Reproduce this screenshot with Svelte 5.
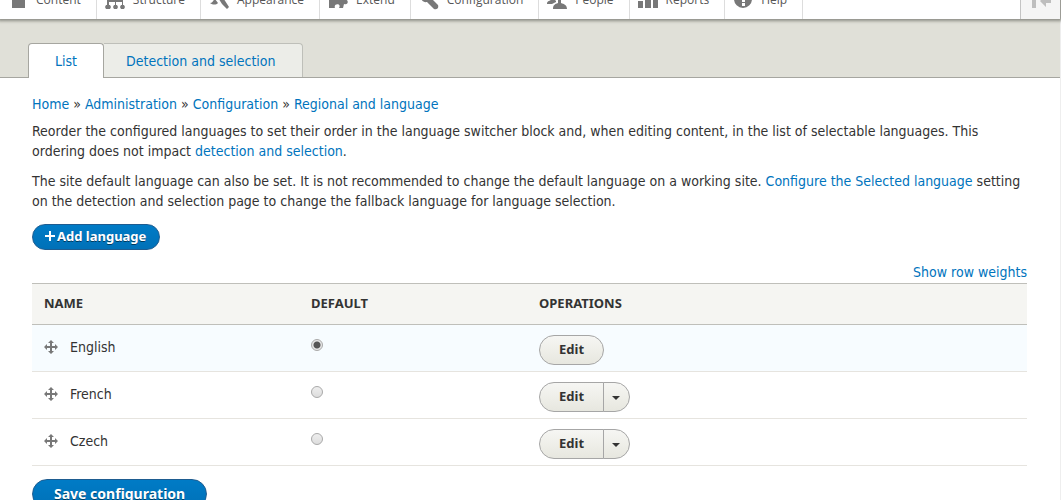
<script>
  const items = [
    { id: 'content', label: 'Content' },
    { id: 'structure', label: 'Structure' },
    { id: 'appearance', label: 'Appearance' },
    { id: 'extend', label: 'Extend' },
    { id: 'configuration', label: 'Configuration' },
    { id: 'people', label: 'People' },
    { id: 'reports', label: 'Reports' },
    { id: 'help', label: 'Help' }
  ];
  const crumbs = ['Home', 'Administration', 'Configuration', 'Regional and language'];
  const languages = [
    { name: 'English', more: false },
    { name: 'French', more: true },
    { name: 'Czech', more: true }
  ];
  let selected = $state('English');
</script>

<div class="page">
  <nav class="toolbar" aria-label="Administration menu">
    {#each items as item}
      <a class="item" href="#{item.id}">
        <svg class="icon" viewBox="0 0 20 20" aria-hidden="true">
          {#if item.id === 'content'}
            <path d="M4 0h7v6h6v12H4zM12 0l5 5h-5z" />
          {:else if item.id === 'structure'}
            <path d="M7 2h6v5h-2v3h7v5h1l1 2-1 2h-3l-1-2 1-2h1v-3h-6v3h1l1 2-1 2H9l-1-2 1-2h1v-3H4v3h1l1 2-1 2H1l-1-2 1-2h1v-5h7V7H7z" />
          {:else if item.id === 'appearance'}
            <path d="M1 13c3 0 3-3 5-4l3 4c-2 2-5 2-8 0zM8 6l3-3 9 14-2 2-5-5z" />
          {:else if item.id === 'extend'}
            <path d="M1 6h5c-2-4 6-4 4 0h6v4c5-2 5 6 0 4l-1 4h-4c3-5-6-5-4 0H1z" />
          {:else if item.id === 'configuration'}
            <path d="M2 5l4 3 3-3-3-4c4-1 7 3 6 7l7 7c1 3-1 5-4 4l-7-7C4 13 1 9 2 5z" />
          {:else if item.id === 'people'}
            <path d="M9 4c0-4 7-4 7 0 0 3-1 4-2 6v3c3 1 6 2 6 6H6c0-4 2-5 5-6v-3C9 8 9 6 9 4zM0 14c0-3 2-3 4-4-2-3-1-7 2-7 0 4 1 6 3 8v1l-4 2z" />
          {:else if item.id === 'reports'}
            <path d="M0 11h5v7H0zM7 6h6v12H7zM15 1h5v17h-5z" />
          {:else}
            <path fill-rule="evenodd" d="M10 0a9 9 0 1 0 0 18 9 9 0 0 0 0-18zM9 12h3v-2c4-2 3-7-2-7-3 0-4 2-4 4h3c0-2 2-2 2 0 0 1-2 1-2 3zM9 13h3v3H9z" />
          {/if}
        </svg>
        <span>{item.label}</span>
      </a>
    {/each}
    <button class="orient" type="button" aria-label="Vertical orientation">
      <svg class="icon" viewBox="0 0 20 20" aria-hidden="true"><path d="M1 2h4v16H1zM20 8v5h-5v4l-6-6 6-6v3z" /></svg>
    </button>
  </nav>

  <header class="head">
    <nav class="tabs" aria-label="Tabs">
      <a class="tab active" href="#list">List</a>
      <a class="tab" href="#detection">Detection and selection</a>
    </nav>
  </header>

  <main>
    <nav class="crumbs" aria-label="Breadcrumb">
      {#each crumbs as crumb, i}{#if i}{' » '}{/if}<a href="#crumb{i}">{crumb}</a>{/each}
    </nav>
    <p>Reorder the configured languages to set their order in the language switcher block and, when editing content, in the list of selectable languages. This ordering does not impact <a href="#detection">detection and selection</a>.</p>
    <p>The site default language can also be set. It is not recommended to change the default language on a working site. <a href="#selected">Configure the Selected language</a> setting on the detection and selection page to change the fallback language for language selection.</p>
    <a class="primary add" href="#add">
      <svg viewBox="0 0 10 10" aria-hidden="true"><path d="M4 0h2v4h4v2H6v4H4V6H0V4h4z" /></svg>Add language
    </a>

    <form onsubmit={(e) => e.preventDefault()}>
      <div class="weights"><button type="button">Show row weights</button></div>
      <table>
        <thead>
          <tr><th class="name" scope="col">Name</th><th class="default" scope="col">Default</th><th scope="col">Operations</th></tr>
        </thead>
        <tbody>
          {#each languages as lang}
            <tr class:current={lang.name === 'English'}>
              <td>
                <div class="lang">
                  <svg viewBox="0 0 14 14" aria-hidden="true"><path d="M7 0l3 3H8v3h3V4l3 3-3 3V8H8v3h2l-3 3-3-3h2V8H3v2L0 7l3-3v2h3V3H4z" /></svg>
                  <label for="lang-{lang.name}">{lang.name}</label>
                </div>
              </td>
              <td><input id="lang-{lang.name}" type="radio" name="default" value={lang.name} bind:group={selected} /></td>
              <td>
                <div class="ops">
                  <button class="edit" type="button">Edit</button>
                  {#if lang.more}
                    <button class="more" type="button" aria-label="List additional actions"><svg viewBox="0 0 8 4" aria-hidden="true"><path d="M0 0h8L4 4z" /></svg></button>
                  {/if}
                </div>
              </td>
            </tr>
          {/each}
        </tbody>
      </table>
      <button class="primary save" type="submit">Save configuration</button>
    </form>
  </main>
</div>

<style>
  :global(body) {
    margin: 0;
    background: #fff;
    color: #333;
    font: 14px/20px "DejaVu Sans Condensed", "Noto Sans", sans-serif;
  }
  :global(html) { overflow: hidden; }
  .page { border-right: 1px solid #eee; }
  a { color: #0074bd; text-decoration: none; }
  button { font: inherit; cursor: pointer; }
  .toolbar {
    position: relative;
    display: flex;
    height: 39px;
    margin-top: -20px;
    background: #fff;
    box-shadow: 0 0 3px 2px #8c8d85;
  }
  .item {
    display: flex;
    align-items: center;
    gap: 8px;
    padding: 0 15px 0 8px;
    border-right: 1px solid #ddd;
    color: #565656;
    font-family: "Open Sans", sans-serif;
    font-size: 12px;
  }
  .icon { width: 20px; height: 20px; fill: #787878; }
  .orient {
    display: flex;
    align-items: center;
    margin-left: auto;
    padding: 0 9px 0 10px;
    border: 0;
    border-left: 1px solid #c4c4c4;
    background: #f5f5f5;
  }
  .orient .icon { fill: #bebebe; }
  .head {
    padding: 24px 28px 0;
    border-bottom: 1px solid #a6a6a0;
    background: #e0e0d8;
  }
  .tabs { display: flex; }
  .tab {
    padding: 7px 26px 6px 22px;
    border: 1px solid #bebfb9;
    border-width: 1px 1px 0 0;
    border-radius: 0 4px 0 0;
    background: #ecede8;
  }
  .tab.active {
    margin-bottom: -1px;
    padding: 7px 26px;
    border-width: 1px 1px 0;
    border-color: #a6a6a0;
    border-radius: 4px 4px 0 0;
    background: #fff;
  }
  main { padding: 16px 33px 0 32px; }
  p { margin: 0 0 10px; }
  .crumbs { margin-bottom: 7px; }
  .primary {
    display: inline-flex;
    align-items: center;
    border: 1px solid #1e5c90;
    border-radius: 20px;
    background: linear-gradient(#007bc6, #0071b8);
    color: #fff;
    font-family: "Noto Sans", sans-serif;
    font-weight: 700;
    text-shadow: 0 1px rgba(0, 0, 0, .5);
  }
  .add { gap: 2px; margin-top: 3px; padding: 1px 13px 3px 12px; font-size: 13px; }
  .add svg { width: 10px; height: 10px; fill: #fff; }
  .weights { margin-top: 12px; padding-bottom: 1px; text-align: right; }
  .weights button { padding: 0; border: 0; background: none; color: #0074bd; }
  table { width: 100%; border-collapse: collapse; table-layout: fixed; }
  th {
    height: 38px;
    padding: 0 12px 2px;
    border: solid #bfbfba;
    border-width: 1px 0;
    background: #f5f5f2;
    font-family: "Noto Sans", sans-serif;
    font-size: 13px;
    text-align: left;
    text-transform: uppercase;
  }
  .name { width: 243px; }
  .default { width: 204px; }
  td {
    height: 46px;
    padding: 0 12px;
    border-bottom: 1px solid #e6e4df;
    vertical-align: middle;
  }
  .current { background: #f7fcff; }
  .lang { display: flex; align-items: center; gap: 12px; padding-bottom: 3px; }
  .lang svg { width: 14px; height: 14px; fill: #787878; }
  input {
    display: block;
    appearance: none;
    width: 12px;
    height: 12px;
    margin: 0 0 6px;
    border: 1px solid #aaa;
    border-radius: 50%;
    background: linear-gradient(#eee, #ddd);
  }
  input:checked { background: radial-gradient(circle, #555 0 3px, #e6e6e6 4px); }
  .ops { display: flex; margin-top: 4px; }
  .edit, .more {
    height: 30px;
    border: 1px solid #a6a6a6;
    background: linear-gradient(#f6f6f3, #e7e7df);
    color: #333;
    font-family: "Noto Sans", sans-serif;
    font-size: 13px;
    font-weight: 700;
  }
  .edit { padding: 0 19px 2px; border-radius: 15px; }
  .edit:not(:last-child) { border-radius: 15px 0 0 15px; }
  .more { display: flex; align-items: center; margin-left: -1px; padding: 2px 9px 0 8px; border-radius: 0 15px 15px 0; }
  .more svg { width: 8px; height: 4px; fill: #333; }
  .save { margin-top: 13px; padding: 4px 21px; }
</style>
